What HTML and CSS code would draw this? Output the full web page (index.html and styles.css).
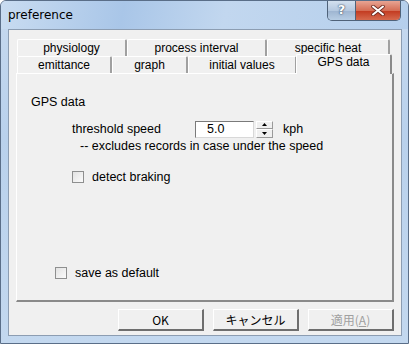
FILE: index.html
```html
<!DOCTYPE html>
<html lang="ja">
<head>
<meta charset="UTF-8">
<title>preference</title>
<link rel="stylesheet" href="styles.css">
</head>
<body>

<div class="window">
  <!-- title bar -->
  <div class="titlebar">
    <span class="title">preference</span>
    <div class="caption-btns">
      <div class="cap-help">?</div>
      <div class="cap-close">
        <svg width="14" height="11" viewBox="0 0 14 11"><path d="M2 1.5 L12 9.5 M12 1.5 L2 9.5" stroke="#6e2a20" stroke-width="3.6" stroke-linecap="round"/><path d="M2 1.5 L12 9.5 M12 1.5 L2 9.5" stroke="#fff" stroke-width="2" stroke-linecap="round"/></svg>
      </div>
    </div>
  </div>

  <div class="client">
    <!-- tabs -->
    <div class="tabs">
      <div class="tab-row">
        <div class="tab w110">physiology</div>
        <div class="tab w140">process interval</div>
        <div class="tab w123">specific heat</div>
      </div>
      <div class="tab-row">
        <div class="tab w95">emittance</div>
        <div class="tab w76">graph</div>
        <div class="tab w109">initial values</div>
        <div class="tab active">GPS data</div>
      </div>
    </div>

    <div class="panel">
      <div class="group-title">GPS data</div>
      <div class="row-speed">
        <span class="lbl">threshold speed</span>
        <div class="edit">5.0</div>
        <div class="spin">
          <div class="spin-up"><svg width="5" height="3" viewBox="0 0 5 3"><path d="M2.5 0 L5 3 L0 3Z" fill="#000"/></svg></div>
          <div class="spin-down"><svg width="5" height="3" viewBox="0 0 5 3"><path d="M0 0 L5 0 L2.5 3Z" fill="#000"/></svg></div>
        </div>
        <span class="unit">kph</span>
      </div>
      <div class="note">-- excludes records in case under the speed</div>
      <label class="check braking"><span class="box"></span>detect braking</label>
      <label class="check save"><span class="box"></span>save as default</label>
    </div>

    <div class="buttons">
      <div class="btn">OK</div>
      <div class="btn">キャンセル</div>
      <div class="btn disabled">適用(<u>A</u>)</div>
    </div>
  </div>
</div>

</body>
</html>
```

FILE: styles.css
```css
/* dialog look */
body {
  margin: 0;
  background: #fff;
  font-family: "Liberation Sans", Arial, "Noto Sans CJK JP", sans-serif;
  font-size: 12px;
  color: #000;
}

.window {
  width: 409px;
  height: 344px;
  box-sizing: border-box;
  border: 1px solid #5a6e88;
  border-radius: 6px 6px 0 0;
  background: linear-gradient(180deg, #c6d9ef 0%, #b9d1ec 40%, #c3d8ef 100%);
  overflow: hidden;
}

.titlebar {
  height: 28px;
  display: flex;
  justify-content: space-between;
  background: linear-gradient(100deg, #c9dcf1 0%, #a9c6e8 30%, #c2d7ef 55%, #b5cfec 100%);
}

.title {
  font-family: "DejaVu Sans", "Liberation Sans", sans-serif;
  font-size: 12px;
  padding: 7px 0 0 7px;
}

.caption-btns {
  display: flex;
  height: 19px;
  margin-right: 7px;
  border: 1px solid #4f6279;
  border-top: none;
  border-radius: 0 0 5px 5px;
  overflow: hidden;
}

.cap-help {
  width: 27px;
  text-align: center;
  font-family: "DejaVu Sans", sans-serif;
  font-weight: bold;
  font-size: 13px;
  line-height: 18px;
  color: #fff;
  text-shadow: 0 0 2px #34465e, 0 0 1px #34465e;
  background: linear-gradient(180deg, #d3e0ef 0%, #b5c9e0 50%, #9db4d0 51%, #b7cde4 100%);
  border-right: 1px solid #4f6279;
}

.cap-close {
  width: 44px;
  display: flex;
  align-items: center;
  justify-content: center;
  background: linear-gradient(180deg, #e8a493 0%, #d56e56 50%, #c2391f 51%, #d66a4e 100%);
}

.client {
  height: 307px;
  margin: 0 6px 0 7px;
  box-sizing: border-box;
  border: 1px solid #8c9db2;
  background: #f0f0f0;
  padding: 9px 7px 0 7px;
  display: flex;
  flex-direction: column;
}

/* tabs */
.tabs {
  padding-left: 1px;
  height: 34px;
}

.tab-row {
  display: flex;
  height: 17px;
}

.tab {
  box-sizing: border-box;
  height: 17px;
  text-align: center;
  line-height: 16px;
  border-top: 1px solid #fff;
  border-left: 1px solid #fff;
  border-right: 2px solid #a0a0a0;
  border-radius: 2px 2px 0 0;
  background: #f0f0f0;
}

.w110 { width: 110px; }
.w140 { width: 140px; }
.w123 { width: 123px; }
.w95 { width: 95px; }
.w76 { width: 76px; }
.w109 { width: 109px; }

.tab.active {
  width: 96px;
  height: 20px;
  margin-top: -2px;
  margin-left: -1px;
  line-height: 14px;
  position: relative;
  z-index: 1;
  border-right-color: #8a8a8a;
}

.panel {
  height: 229px;
  box-sizing: border-box;
  border-top: 1px solid #fff;
  border-left: 1px solid #fff;
  border-right: 2px solid #8a8a8a;
  border-bottom: 2px solid #8a8a8a;
  padding: 21px 0 0 14px;
  font-size: 12.5px;
}

.group-title {
  height: 25px;
}

.row-speed {
  display: flex;
  align-items: center;
  padding-left: 41px;
  height: 18px;
}

.lbl {
  width: 123px;
}

.edit {
  box-sizing: border-box;
  width: 59px;
  height: 17px;
  background: #fff;
  border: 1px solid #7a7a7a;
  border-right-color: #d8d8d8;
  border-bottom-color: #d8d8d8;
  padding-left: 11px;
  line-height: 15px;
}

.spin {
  margin-left: 2px;
  width: 17px;
  height: 17px;
  display: flex;
  flex-direction: column;
}

.spin-up, .spin-down {
  box-sizing: border-box;
  height: 8px;
  border: 1px solid #9a9a9a;
  border-top-color: #fff;
  border-left-color: #fff;
  background: #f0f0f0;
  display: flex;
  align-items: center;
  justify-content: center;
}

.spin-down { height: 9px; }

.unit {
  margin-left: 10px;
}

.note {
  padding-left: 49px;
  margin-top: 1px;
  height: 31px;
}

.check {
  display: flex;
  align-items: center;
  height: 14px;
}

.check .box {
  box-sizing: border-box;
  width: 12px;
  height: 12px;
  border: 1px solid #8e8f8f;
  background: linear-gradient(135deg, #e2e2e2 0%, #fbfbfb 100%);
  margin-right: 8px;
}

.braking {
  padding-left: 41px;
}

.save {
  padding-left: 24px;
  margin-top: 82px;
}

/* dialog buttons */
.buttons {
  display: flex;
  justify-content: flex-end;
  gap: 9px;
  margin-top: 7px;
  margin-right: 0;
}

.btn {
  box-sizing: border-box;
  width: 86px;
  height: 22px;
  text-align: center;
  line-height: 19px;
  font-family: "Noto Sans CJK JP", "Liberation Sans", sans-serif;
  font-size: 12px;
  border: 1px solid #fff;
  border-right: 2px solid #6e6e6e;
  border-bottom: 2px solid #6e6e6e;
  background: #f0f0f0;
}

.btn.disabled {
  color: #a0a0a0;
}
```
